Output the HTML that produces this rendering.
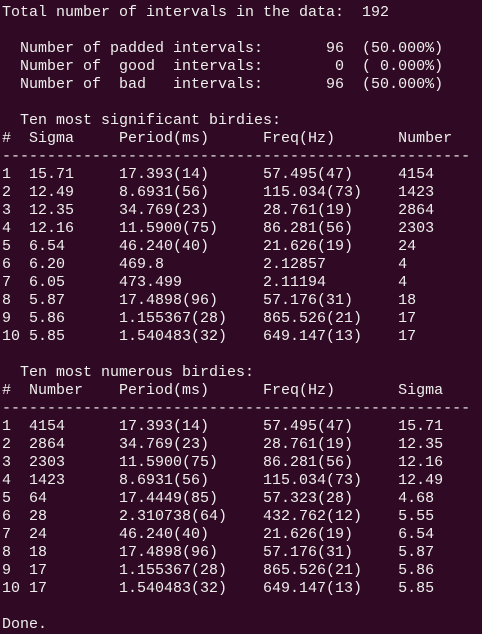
<!DOCTYPE html>
<html><head><meta charset="utf-8"><style>
html,body{margin:0;padding:0;background:#300a24;width:482px;height:634px;overflow:hidden}
pre{margin:0;padding:4px 0 0 2px;font-family:"Liberation Mono","DejaVu Sans Mono",monospace;font-size:15px;line-height:18px;color:#eeeeec}
</style></head><body><pre>Total number of intervals in the data:  192

  Number of padded intervals:       96  (50.000%)
  Number of  good  intervals:        0  ( 0.000%)
  Number of  bad   intervals:       96  (50.000%)

  Ten most significant birdies:
#  Sigma     Period(ms)      Freq(Hz)       Number
----------------------------------------------------
1  15.71     17.393(14)      57.495(47)     4154
2  12.49     8.6931(56)      115.034(73)    1423
3  12.35     34.769(23)      28.761(19)     2864
4  12.16     11.5900(75)     86.281(56)     2303
5  6.54      46.240(40)      21.626(19)     24
6  6.20      469.8           2.12857        4
7  6.05      473.499         2.11194        4
8  5.87      17.4898(96)     57.176(31)     18
9  5.86      1.155367(28)    865.526(21)    17
10 5.85      1.540483(32)    649.147(13)    17

  Ten most numerous birdies:
#  Number    Period(ms)      Freq(Hz)       Sigma
----------------------------------------------------
1  4154      17.393(14)      57.495(47)     15.71
2  2864      34.769(23)      28.761(19)     12.35
3  2303      11.5900(75)     86.281(56)     12.16
4  1423      8.6931(56)      115.034(73)    12.49
5  64        17.4449(85)     57.323(28)     4.68
6  28        2.310738(64)    432.762(12)    5.55
7  24        46.240(40)      21.626(19)     6.54
8  18        17.4898(96)     57.176(31)     5.87
9  17        1.155367(28)    865.526(21)    5.86
10 17        1.540483(32)    649.147(13)    5.85

Done.</pre></body></html>
